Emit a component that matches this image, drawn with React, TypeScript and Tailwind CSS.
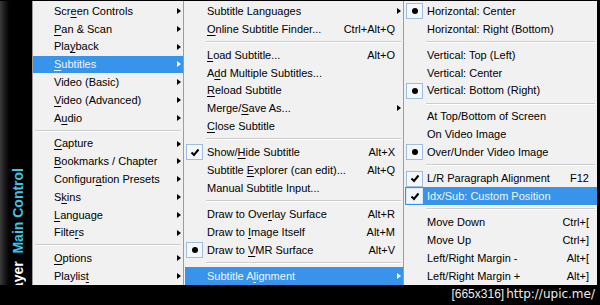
import clsx from "clsx";

type Item = {
  label: string;
  u?: number;
  sc?: string;
  sub?: boolean;
  mark?: "check" | "radio";
  hi?: boolean;
};
type Entry = Item | "sep";

const mainMenu: Entry[] = [
  { label: "Screen Controls", u: 3, sub: true },
  { label: "Pan & Scan", u: 0, sub: true },
  { label: "Playback", u: 3, sub: true },
  { label: "Subtitles", u: 0, sub: true, hi: true },
  { label: "Video (Basic)", sub: true },
  { label: "Video (Advanced)", u: 0, sub: true },
  { label: "Audio", u: 1, sub: true },
  "sep",
  { label: "Capture", u: 0, sub: true },
  { label: "Bookmarks / Chapter", u: 0, sub: true },
  { label: "Configuration Presets", u: 8, sub: true },
  { label: "Skins", u: 1, sub: true },
  { label: "Language", u: 0, sub: true },
  { label: "Filters", u: 5, sub: true },
  "sep",
  { label: "Options", u: 0, sub: true },
  { label: "Playlist", u: 7, sub: true },
];

const subtitleMenu: Entry[] = [
  { label: "Subtitle Languages", sub: true },
  { label: "Online Subtitle Finder...", u: 0, sc: "Ctrl+Alt+Q" },
  "sep",
  { label: "Load Subtitle...", u: 0, sc: "Alt+O" },
  { label: "Add Multiple Subtitles...", u: 1 },
  { label: "Reload Subtitle", u: 0 },
  { label: "Merge/Save As...", u: 6, sub: true },
  { label: "Close Subtitle", u: 0 },
  "sep",
  { label: "Show/Hide Subtitle", u: 5, sc: "Alt+X", mark: "check" },
  { label: "Subtitle Explorer (can edit)...", u: 9, sc: "Alt+Q" },
  { label: "Manual Subtitle Input..." },
  "sep",
  { label: "Draw to Overlay Surface", u: 11, sc: "Alt+R" },
  { label: "Draw to Image Itself", u: 8, sc: "Alt+M" },
  { label: "Draw to VMR Surface", u: 8, sc: "Alt+V", mark: "radio" },
  "sep",
  { label: "Subtitle Alignment", u: 10, sub: true, hi: true },
];

const alignMenu: Entry[] = [
  { label: "Horizontal: Center", mark: "radio" },
  { label: "Horizontal: Right (Bottom)" },
  "sep",
  { label: "Vertical: Top (Left)" },
  { label: "Vertical: Center" },
  { label: "Vertical: Bottom (Right)", mark: "radio" },
  "sep",
  { label: "At Top/Bottom of Screen" },
  { label: "On Video Image" },
  { label: "Over/Under Video Image", mark: "radio" },
  "sep",
  { label: "L/R Paragraph Alignment", sc: "F12", mark: "check" },
  { label: "Idx/Sub: Custom Position", mark: "check", hi: true },
  "sep",
  { label: "Move Down", sc: "Ctrl+[" },
  { label: "Move Up", sc: "Ctrl+]" },
  { label: "Left/Right Margin -", sc: "Alt+[" },
  { label: "Left/Right Margin +", sc: "Alt+]" },
];

function Label({ text, u }: { text: string; u?: number }) {
  if (u === undefined) return <>{text}</>;
  return (
    <>
      {text.slice(0, u)}
      <span className="underline decoration-1 underline-offset-[2px]">{text[u]}</span>
      {text.slice(u + 1)}
    </>
  );
}

function Mark({ kind, hi }: { kind: "check" | "radio"; hi?: boolean }) {
  return (
    <div
      className={clsx(
        "flex h-[16px] w-[17px] items-center justify-center border",
        hi ? "border-[#d8e8f8] bg-[#eef5fc]" : "border-[#9dbcdf] bg-[#f4f8fc]"
      )}
    >
      {kind === "radio" ? (
        <div className="h-[6px] w-[6px] rounded-full bg-black" />
      ) : (
        <svg width="10" height="9" viewBox="0 0 10 9">
          <path d="M1.5 4.5 L4 7 L8.5 1.5" fill="none" stroke="#000" strokeWidth="2" />
        </svg>
      )}
    </div>
  );
}

function Menu({
  entries,
  className,
  gutter,
  sepInset,
}: {
  entries: Entry[];
  className: string;
  gutter: string;
  sepInset: string;
}) {
  return (
    <div className={clsx("flex shrink-0 flex-col border-l border-[#9c9c9c] bg-[#f1f1f1] pt-px", className)}>
      {entries.map((e, i) =>
        e === "sep" ? (
          <div key={i} className={clsx("flex h-[8.5px] flex-col justify-center pr-[2px]", sepInset)}>
            <div className="h-px bg-[#cdcdcd]" />
            <div className="h-px bg-white" />
          </div>
        ) : (
          <div
            key={i}
            className={clsx(
              "flex h-[17.85px] shrink-0 items-center",
              e.hi ? "bg-[#3894ea] text-[#eef6ff]" : "text-black"
            )}
          >
            <div className={clsx("flex shrink-0 pl-px", gutter)}>
              {e.mark && <Mark kind={e.mark} hi={e.hi} />}
            </div>
            <span className="flex-1 whitespace-nowrap">
              <Label text={e.label} u={e.u} />
            </span>
            {e.sc && <span className="whitespace-nowrap">{e.sc}</span>}
            <div className="flex w-[8px] shrink-0 justify-center">
              {e.sub && (
                <div
                  className={clsx(
                    "h-0 w-0 border-y-[3.5px] border-l-[4px] border-y-transparent",
                    e.hi ? "border-l-white" : "border-l-black"
                  )}
                />
              )}
            </div>
          </div>
        )
      )}
    </div>
  );
}

export default function App() {
  return (
    <div className="flex h-[305px] w-[600px] flex-col overflow-hidden bg-black font-['Liberation_Sans',Arial,sans-serif] text-[11px]">
      <div className="flex h-[285px] shrink-0 border-t border-black">
        {/* rotated skin title */}
        <div className="flex w-[32px] shrink-0 flex-col items-center overflow-hidden bg-gradient-to-r from-[#3a3a3a] via-black via-40% to-black pl-[4px] pt-[167px]">
          <div className="shrink-0 rotate-180 whitespace-nowrap text-[14px] font-bold leading-[16px] [writing-mode:vertical-rl]">
            <span className="text-white">Player</span>
            <span className="text-[#3ec4e6]">{"\u00a0 "}Main Control</span>
          </div>
        </div>

        <Menu entries={mainMenu} className="w-[151px]" gutter="w-[21px]" sepInset="pl-[2px]" />
        <Menu entries={subtitleMenu} className="w-[220px] pl-px" gutter="w-[22px]" sepInset="pl-[21px]" />
        <Menu entries={alignMenu} className="w-[194px] pl-px" gutter="w-[22px]" sepInset="pl-[21px]" />
      </div>

      {/* watermark bar */}
      <div className="flex h-[20px] items-center justify-end pb-[2px] pr-[5px] text-[#ececec]">
        <span className="text-[12px]">[665x316]</span>
        <span className="ml-[2px] font-['DejaVu_Sans',sans-serif] text-[12px]">http://upic.me/</span>
      </div>
    </div>
  );
}
